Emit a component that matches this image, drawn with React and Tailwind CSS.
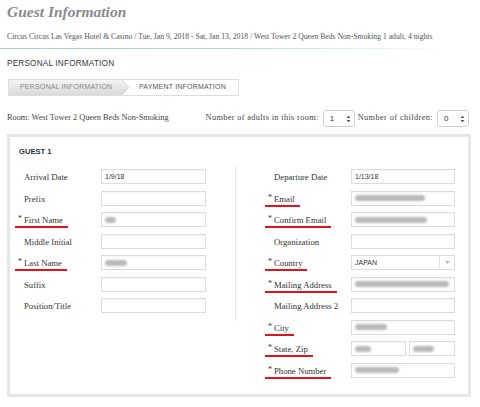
import React from 'react'

const serif = { fontFamily: '"Liberation Serif", "Times New Roman", serif' }
const sans = { fontFamily: '"Liberation Sans", Arial, sans-serif' }

function Blur({ w, ml = 0 }) {
  return (
    <div
      className="h-[6px] bg-[#b9b9b9] blur-[1.2px] rounded-sm"
      style={{ width: w, marginLeft: ml }}
    />
  )
}

function Input({ value, blur, width = 'w-[105px]' }) {
  return (
    <div
      className={`${width} h-[15px] border border-[#dcdcdc] bg-white flex items-center pl-[3px] text-[7px] text-[#333] shadow-[inset_0_1px_1px_rgba(0,0,0,0.04)]`}
      style={sans}
    >
      {value}
      {blur && <Blur w={blur} />}
    </div>
  )
}

function Label({ text, req }) {
  if (!req) return <span className="text-[8.7px] text-[#333]">{text}</span>
  return (
    <span className="-ml-[9px] pl-[3px] pr-[5px] pb-[1px] border-b-2 border-[#e3121b] text-[8.7px] text-[#333] leading-[11px]">
      <span className="text-[8px] relative -top-[2px] mr-[2px]">*</span>
      {text}
    </span>
  )
}

function Row({ label, req, children }) {
  return (
    <div className="h-[21.5px] flex items-center">
      <div className="w-[77px] -mt-[3px]">
        <Label text={label} req={req} />
      </div>
      {children}
    </div>
  )
}

function Stepper({ value }) {
  return (
    <div
      className="w-[32px] h-[17px] border border-[#cfcfcf] rounded-[3px] bg-white flex items-center justify-between pl-[6px] pr-[3px] text-[8px] text-[#333]"
      style={sans}
    >
      <span>{value}</span>
      <svg width="5" height="8" viewBox="0 0 5 8">
        <path d="M0.5 3 L2.5 0.8 L4.5 3 Z M0.5 5 L2.5 7.2 L4.5 5 Z" fill="#555" />
      </svg>
    </div>
  )
}

export default function App() {
  return (
    <div className="w-[480px] h-[407px] bg-white overflow-hidden" style={serif}>
      <div className="px-[7px]">
        <h1 className="h-[24px] leading-[24px] text-[15.5px] font-bold italic text-[#8a8a8a]">
          Guest Information
        </h1>
        <p className="mt-[7px] leading-[12px] text-[7.7px] text-[#555] whitespace-nowrap">
          Circus Circus Las Vegas Hotel &amp; Casino / Tue, Jan 9, 2018 - Sat, Jan 13, 2018 / West Tower 2 Queen Beds Non-Smoking 1 adult, 4 nights
        </p>
      </div>
      <div className="mt-[5px] h-px w-[450px] bg-gradient-to-r from-[#a9cfd6] via-[#b4d6dc] to-transparent" />

      <div className="px-[7px]">
        <h2 className="mt-[9px] leading-[12px] text-[8.2px] text-[#333] tracking-[0.2px]" style={sans}>
          PERSONAL INFORMATION
        </h2>

        <div className="mt-[9px] ml-px w-[231px] h-[17px] border border-[#dedede] flex items-stretch text-[7px] tracking-[0.2px]" style={sans}>
          <div className="w-[112px] bg-gradient-to-b from-[#f4f4f4] to-[#d9d9d9] flex items-center pl-[11px] text-[#8a8a8a]">
            PERSONAL INFORMATION
          </div>
          <svg width="9" height="15" viewBox="0 0 9 15" className="shrink-0">
            <defs>
              <linearGradient id="tg" x1="0" y1="0" x2="0" y2="1">
                <stop offset="0" stopColor="#f4f4f4" />
                <stop offset="1" stopColor="#d9d9d9" />
              </linearGradient>
            </defs>
            <path d="M0 0 L1 0 L8 7.5 L1 15 L0 15 Z" fill="url(#tg)" />
            <path d="M1 0 L8 7.5 L1 15" fill="none" stroke="#d4d4d4" strokeWidth="0.8" />
          </svg>
          <div className="flex-1 flex items-center pl-[9px] text-[#555]">PAYMENT INFORMATION</div>
        </div>

        <div className="mt-[14px] h-[17px] flex items-center text-[8.3px] text-[#444]">
          <span>Room: West Tower 2 Queen Beds Non-Smoking</span>
          <span className="ml-auto mr-[4px] tracking-[0.35px]">Number of adults in this room:</span>
          <Stepper value="1" />
          <span className="ml-[3px] mr-[4px] tracking-[0.4px]">Number of children:</span>
          <Stepper value="0" />
          <span className="w-[4px]" />
        </div>

        <div className="mt-[7px] w-[464px] h-[263px] border-[3px] border-[#e3e7e7] bg-white">
          <div className="pt-[10px] pl-[9px] leading-[10px] text-[7.6px] font-semibold text-[#333]" style={sans}>
            GUEST 1
          </div>
          <div className="mt-[9px] flex items-start">
            <div className="w-[226px] pl-[14px] border-r border-[#e6e6e6] pb-[4px]">
              <Row label="Arrival Date"><Input value="1/9/18" /></Row>
              <Row label="Prefix"><Input /></Row>
              <Row label="First Name" req><Input blur={11} /></Row>
              <Row label="Middle Initial"><Input /></Row>
              <Row label="Last Name" req><Input blur={22} /></Row>
              <Row label="Suffix"><Input /></Row>
              <Row label="Position/Title"><Input /></Row>
            </div>
            <div className="flex-1 pl-[38px]">
              <Row label="Departure Date"><Input value="1/13/18" width="w-[104px]" /></Row>
              <Row label="Email" req><Input blur={70} width="w-[104px]" /></Row>
              <Row label="Confirm Email" req><Input blur={72} width="w-[104px]" /></Row>
              <Row label="Organization"><Input width="w-[104px]" /></Row>
              <Row label="Country" req>
                <div className="w-[104px] h-[15px] border border-[#dcdcdc] flex items-center text-[7px] text-[#333]" style={sans}>
                  <span className="pl-[3px] flex-1">JAPAN</span>
                  <div className="w-[15px] h-full border-l border-[#e2e2e2] flex items-center justify-center">
                    <svg width="5" height="3" viewBox="0 0 5 3">
                      <path d="M0 0 L5 0 L2.5 3 Z" fill="#b8b8b8" />
                    </svg>
                  </div>
                </div>
              </Row>
              <Row label="Mailing Address" req><Input blur={94} width="w-[104px]" /></Row>
              <Row label="Mailing Address 2"><Input width="w-[104px]" /></Row>
              <Row label="City" req><Input blur={32} width="w-[104px]" /></Row>
              <Row label="State, Zip" req>
                <div className="flex gap-[3px]">
                  <Input blur={16} width="w-[55px]" />
                  <div className="w-[46px] h-[15px] border border-[#dcdcdc] flex items-center pl-[3px]">
                    <Blur w={21} />
                  </div>
                </div>
              </Row>
              <Row label="Phone Number" req><Input blur={44} width="w-[104px]" /></Row>
            </div>
          </div>
        </div>
      </div>
    </div>
  )
}
